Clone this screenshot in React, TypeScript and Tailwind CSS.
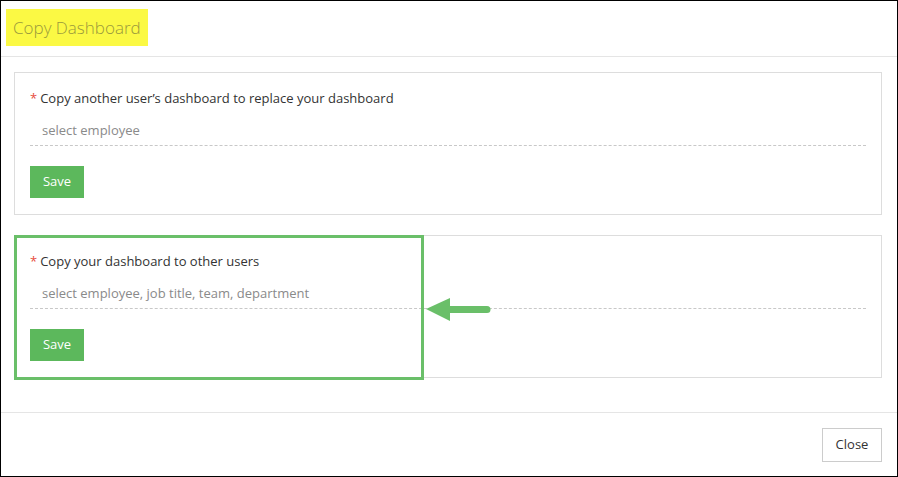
import React from 'react';

const font = { fontFamily: '"Open Sans", "Noto Sans", Arial, sans-serif' };

function Card({
  label,
  placeholder,
  highlight,
}: {
  label: string;
  placeholder: string;
  highlight?: boolean;
}) {
  return (
    <div className="relative border border-[#dddddd] bg-white px-[15px] pt-[15px] pb-[16px]">
      <div className="h-5 text-[13px] leading-5 text-[#333]">
        <span className="mr-[3px] text-[#e74c3c]">*</span>
        {label}
      </div>
      <div className="mt-[6px] h-8 border-b border-dashed border-[#c8c8c8] pl-3 text-[13px] leading-8 text-[#8a8a8a]">
        {placeholder}
      </div>
      <button
        type="button"
        className="mt-5 h-8 w-[54px] bg-[#5cb85c] text-[13px] font-medium text-white"
      >
        Save
      </button>
      {highlight && (
        <>
          {/* annotation frame */}
          <div className="pointer-events-none absolute -left-[1px] -top-[1px] h-[145px] w-[410px] border-[3px] border-[#6abf69]" />
          {/* annotation arrow */}
          <svg
            className="pointer-events-none absolute left-[410px] top-[61px]"
            width="66"
            height="26"
            viewBox="0 0 66 26"
          >
            <polygon points="1,12 25,1 25,24" fill="#6abf69" />
            <line x1="24" y1="12.5" x2="62" y2="12.5" stroke="#6abf69" strokeWidth="7" strokeLinecap="round" />
          </svg>
        </>
      )}
    </div>
  );
}

export default function App() {
  return (
    <div style={font} className="flex h-[477px] w-[898px] flex-col border border-black bg-white">
      <div className="h-[56px] shrink-0 border-b border-[#e5e5e5] pl-[5px] pt-[8px]">
        <div className="inline-block h-[37px] bg-[#fbf944] px-[7px] text-[17px] font-light leading-[37px] text-[#9a9a3c]">
          Copy Dashboard
        </div>
      </div>
      <div className="flex flex-col gap-[20px] px-[15px] pt-[15px] pb-[34px] pl-[13px]">
        <Card label="Copy another user’s dashboard to replace your dashboard" placeholder="select employee" />
        <Card
          label="Copy your dashboard to other users"
          placeholder="select employee, job title, team, department"
          highlight
        />
      </div>
      <div className="flex flex-1 items-start justify-end border-t border-[#e5e5e5] pr-[15px] pt-[15px]">
        <button
          type="button"
          className="h-[34px] w-[60px] border border-[#cccccc] bg-white text-[13px] text-[#333]"
        >
          Close
        </button>
      </div>
    </div>
  );
}
